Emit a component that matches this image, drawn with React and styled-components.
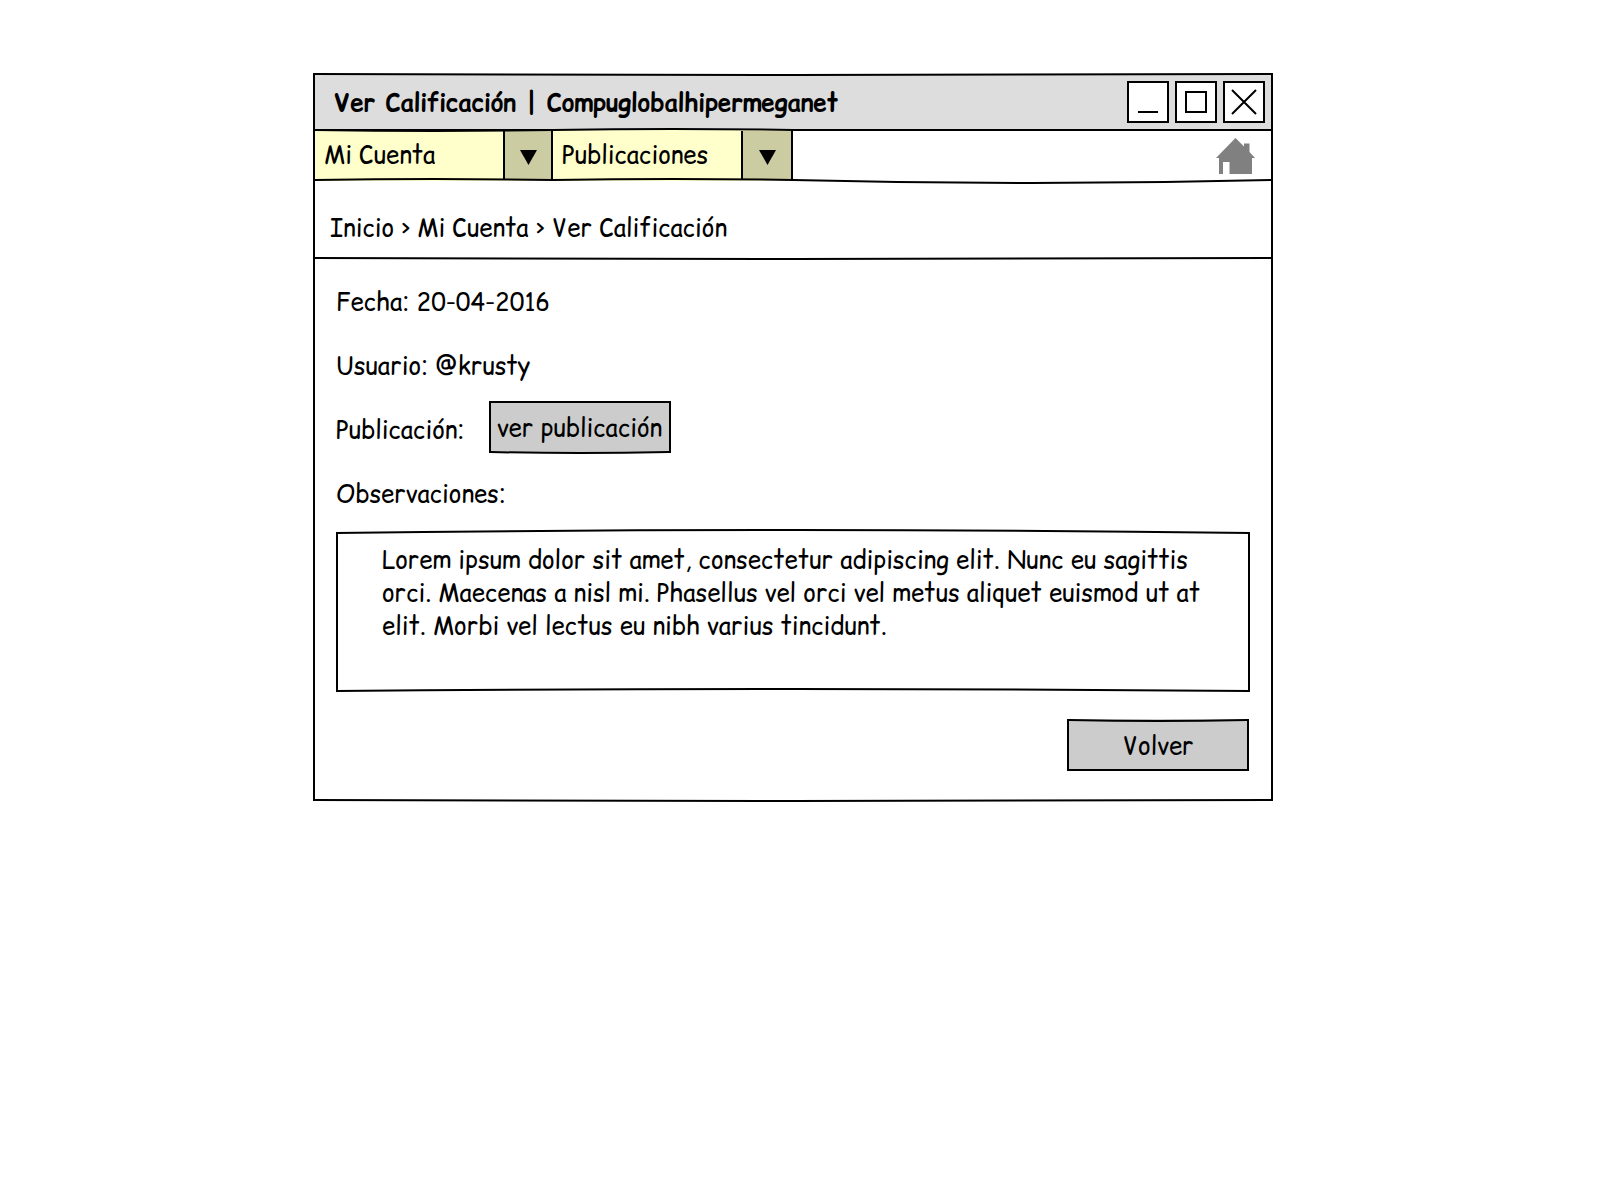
import React from "react";
import styled, { createGlobalStyle } from "styled-components";

const ink = "#000";
const comic = `"Comic Relief", "Comic Neue", Lato, "Noto Sans", sans-serif`;

const GlobalStyle = createGlobalStyle`
  *, *::before, *::after { box-sizing: border-box; }
  body {
    margin: 0;
    background: #fff;
    color: ${ink};
    font-family: ${comic};
    font-size: 24px;
    line-height: 33px;
  }
  button, select, textarea { font: inherit; color: inherit; }
`;

const Page = styled.div`
  padding: 73px 327px 73px 313px;
`;

const Window = styled.main`
  position: relative;
  border: solid ${ink};
  border-width: 0 2px;
  padding: 2px 0;
`;

/* Hand-drawn edge: a 2px stroke that bows up or down in its middle. */
const Edge = styled.svg`
  position: absolute;
  z-index: 1;
  left: ${({ $inset = 0 }) => -$inset}px;
  width: calc(100% + ${({ $inset = 0 }) => $inset * 2}px);
  height: 2px;
  overflow: visible;
  pointer-events: none;
  ${({ $side }) => ($side === "top" ? "top: 0;" : "bottom: 0;")}
`;

function SketchEdge({ side, bow = 0, inset = 0 }) {
  return (
    <Edge
      $side={side}
      $inset={inset}
      viewBox="0 0 100 2"
      preserveAspectRatio="none"
      aria-hidden="true"
    >
      <path
        d={`M0 1 Q50 ${1 + bow * 2} 100 1`}
        fill="none"
        stroke={ink}
        strokeWidth="2"
        vectorEffect="non-scaling-stroke"
      />
    </Edge>
  );
}

const TitleBar = styled.header`
  display: flex;
  align-items: center;
  justify-content: space-between;
  height: 56px;
  padding: 0 6px 0 19px;
  background: #ddd;
  border-bottom: 2px solid ${ink};
`;

const Title = styled.h1`
  margin: 0;
  padding-top: 1px;
  font-size: 24px;
  font-weight: 700;
`;

const WindowControls = styled.div`
  display: flex;
  gap: 6px;
`;

const ControlButton = styled.button`
  display: grid;
  place-items: center;
  width: 42px;
  height: 42px;
  padding: 0;
  border: 2px solid ${ink};
  background: #fff;
`;

const Glyph = styled.svg`
  display: block;
  width: 38px;
  height: 38px;
  fill: none;
  stroke: ${ink};
  stroke-width: 2;
`;

const NavBar = styled.nav`
  display: flex;
  height: 52px;
  margin-top: -2px;
`;

const Picker = styled.div`
  position: relative;
  flex: none;
  width: ${({ $width }) => $width}px;
`;

const PickerSelect = styled.select`
  appearance: none;
  display: block;
  width: 100%;
  height: 52px;
  margin: 0;
  padding: 0 56px ${({ $ruled }) => ($ruled ? 4 : 2)}px 9px;
  border: solid ${ink};
  border-width: ${({ $ruled }) => ($ruled ? 2 : 0)}px 2px 0 0;
  border-radius: 0;
  background: #ffffcc;
`;

const PickerArrow = styled.span`
  position: absolute;
  top: 2px;
  right: 2px;
  bottom: 2px;
  display: grid;
  place-items: center;
  width: ${({ $width }) => $width}px;
  padding-top: 4px;
  border-left: 2px solid ${ink};
  background: #cccca3;
  pointer-events: none;
`;

const NavRest = styled.div`
  position: relative;
  flex: 1;
  display: flex;
  align-items: center;
  justify-content: flex-end;
  padding: 2px 16px 0 0;
`;

const HomeLink = styled.a`
  display: block;
  color: #808080;
`;

const Breadcrumb = styled.nav`
  position: relative;
  display: flex;
  gap: 7px;
  height: 78px;
  padding: 30px 15px 0;

  a { color: inherit; text-decoration: none; }
`;

const Content = styled.form`
  padding: 10px 21px 24px;
`;

const Row = styled.div`
  display: flex;
  align-items: center;
  gap: 24px;
  height: 64px;
`;

const SketchButton = styled.button`
  position: relative;
  width: 182px;
  height: 52px;
  margin: 0 0 4px;
  padding: ${({ $curved }) => ($curved === "top" ? "2px 0 0" : "0 0 2px")};
  border: 2px solid ${ink};
  border-width: ${({ $curved }) => ($curved === "top" ? "0 2px 2px" : "2px 2px 0")};
  background: #ccc;
  white-space: nowrap;
`;

const NotesBox = styled.div`
  position: relative;
  margin-top: 7px;
  border: solid ${ink};
  border-width: 0 2px;
`;

const Notes = styled.textarea`
  display: block;
  width: 100%;
  height: 160px;
  padding: 11px 40px 11px 44px;
  border: 0;
  background: transparent;
  resize: none;
  outline: none;
  overflow: hidden;
`;

const Footer = styled.footer`
  display: flex;
  justify-content: flex-end;
  margin-top: 27px;
  padding-right: 1px;
`;

function MenuPicker({ id, label, width, arrowWidth, bowTop, ruled }) {
  return (
    <Picker $width={width}>
      <PickerSelect id={id} aria-label={label} defaultValue={label} $ruled={ruled}>
        <option>{label}</option>
      </PickerSelect>
      <PickerArrow $width={arrowWidth}>
        <svg width="17" height="15" viewBox="0 0 17 15" display="block" aria-hidden="true">
          <path d="M0 0H17L8.500 15Z" fill={ink} />
        </svg>
      </PickerArrow>
      <SketchEdge side="top" bow={bowTop} />
      <SketchEdge side="bottom" bow={-1} />
    </Picker>
  );
}

const text = `Lorem ipsum dolor sit amet, consectetur adipiscing elit. Nunc eu sagittis
orci. Maecenas a nisl mi. Phasellus vel orci vel metus aliquet euismod ut at
elit. Morbi vel lectus eu nibh varius tincidunt.`;

export default function App() {
  return (
    <>
      <GlobalStyle />
      <Page>
        <Window>
          <SketchEdge side="top" bow={1} inset={2} />
          <TitleBar>
            <Title>Ver Calificación | Compuglobalhipermeganet</Title>
            <WindowControls>
              <ControlButton type="button" aria-label="Minimizar">
                <Glyph viewBox="0 0 38 38"><path d="M9 29H29" /></Glyph>
              </ControlButton>
              <ControlButton type="button" aria-label="Maximizar">
                <Glyph viewBox="0 0 38 38"><path d="M9 9H29V29H9Z" /></Glyph>
              </ControlButton>
              <ControlButton type="button" aria-label="Cerrar">
                <Glyph viewBox="0 0 38 38"><path d="M7 7L31 31M31 7L7 31" /></Glyph>
              </ControlButton>
            </WindowControls>
          </TitleBar>

          <NavBar aria-label="Menú">
            <MenuPicker id="cuenta" label="Mi Cuenta" width={238} arrowWidth={48} bowTop={1} ruled />
            <MenuPicker id="publicaciones" label="Publicaciones" width={240} arrowWidth={50} bowTop={-1} />
            <NavRest>
              <HomeLink href="#inicio" aria-label="Inicio">
                <svg width="39" height="36" viewBox="0 0 39 36" fill="currentColor" display="block" aria-hidden="true">
                  <path d="M19.500 0L28 8.500V5.500H33.500V14L39 20H36V36H13.500V24H7V36H3V20H0Z" />
                </svg>
              </HomeLink>
              <SketchEdge side="bottom" bow={3} />
            </NavRest>
          </NavBar>

          <Breadcrumb aria-label="Ruta">
            <a href="#inicio">Inicio</a>
            <span>&gt;</span>
            <a href="#cuenta">Mi Cuenta</a>
            <span>&gt;</span>
            <span>Ver Calificación</span>
            <SketchEdge side="bottom" bow={1} inset={2} />
          </Breadcrumb>

          <Content>
            <Row>Fecha: 20-04-2016</Row>
            <Row>Usuario: @krusty</Row>
            <Row>
              <span>Publicación:</span>
              <SketchButton type="button" $curved="bottom">
                ver publicación
                <SketchEdge side="bottom" bow={1} />
              </SketchButton>
            </Row>
            <Row>
              <label htmlFor="observaciones">Observaciones:</label>
            </Row>
            <NotesBox>
              <SketchEdge side="top" bow={-3} inset={2} />
              <Notes id="observaciones" readOnly defaultValue={text} />
              <SketchEdge side="bottom" bow={-2} inset={2} />
            </NotesBox>
            <Footer>
              <SketchButton type="button" $curved="top">
                Volver
                <SketchEdge side="top" bow={1} />
              </SketchButton>
            </Footer>
          </Content>
          <SketchEdge side="bottom" bow={1} inset={2} />
        </Window>
      </Page>
    </>
  );
}
